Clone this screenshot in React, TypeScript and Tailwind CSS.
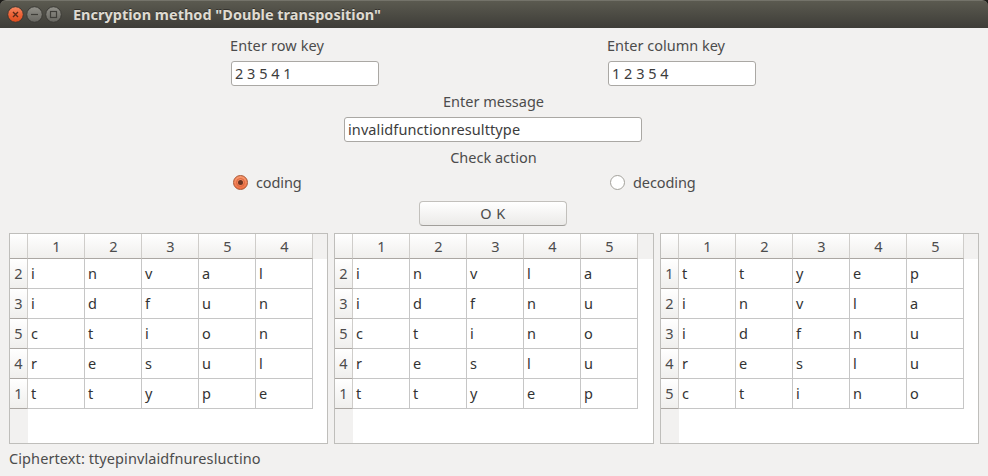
type Grid = { columns: string; rows: [string, string][]; width: string };

const grids: Grid[] = [
  {
    columns: "12354",
    rows: [["2", "inval"], ["3", "idfun"], ["5", "ction"], ["4", "resul"], ["1", "ttype"]],
    width: "w-[319px]",
  },
  {
    columns: "12345",
    rows: [["2", "invla"], ["3", "idfnu"], ["5", "ctino"], ["4", "reslu"], ["1", "ttyep"]],
    width: "w-[320px]",
  },
  {
    columns: "12345",
    rows: [["1", "ttyep"], ["2", "invla"], ["3", "idfnu"], ["4", "reslu"], ["5", "ctino"]],
    width: "w-[319px]",
  },
];

function TitleBar() {
  return (
    <div className="bg-[#1d1c19]">
      <header className="flex h-7 items-center rounded-t-[6px] border-t border-[#74736a] bg-gradient-to-b from-[#5b5a50] to-[#3e3d38] pl-[7px] text-[14.5px] font-bold text-[#dfdbd2]">
        <svg width="56" height="18" viewBox="0 0 56 18" fill="none">
          <defs>
            <linearGradient id="close" x1="0" y1="0" x2="0" y2="1">
              <stop offset="0" stopColor="#f68a64" />
              <stop offset="0.5" stopColor="#ee6337" />
              <stop offset="1" stopColor="#dc4c1d" />
            </linearGradient>
            <linearGradient id="control" x1="0" y1="0" x2="0" y2="1">
              <stop offset="0" stopColor="#92918a" />
              <stop offset="1" stopColor="#676660" />
            </linearGradient>
          </defs>
          <circle cx="8.5" cy="8.5" r="7.8" fill="url(#close)" stroke="#3b3832" />
          <circle cx="27.5" cy="8.5" r="7.8" fill="url(#control)" stroke="#3b3a35" />
          <circle cx="46.5" cy="8.5" r="7.8" fill="url(#control)" stroke="#3b3a35" />
          <path d="M6 6l5 5M11 6l-5 5" stroke="#5b2a18" strokeWidth="1.4" />
          <path d="M24 8.5h7" stroke="#3f3e39" strokeWidth="1.2" />
          <rect x="43.5" y="5.5" width="6" height="6" stroke="#3f3e39" strokeWidth="1.2" />
        </svg>
        <h1 className="ml-[10px] pb-[2px] whitespace-pre [text-shadow:0_-1px_0_#33322d]">Encryption method "Double transposition"</h1>
      </header>
    </div>
  );
}

function Field({ value, className }: { value: string; className: string }) {
  return (
    <input
      readOnly
      value={value}
      className={`block h-[25px] rounded-[3px] border border-[#aaa8a4] bg-white pb-[2px] pl-[3px] text-[#3c3c3c] outline-none ${className}`}
    />
  );
}

function Radio({ checked, label, className }: { checked?: boolean; label: string; className: string }) {
  return (
    <label className={`flex w-[377px] items-center ${className}`}>
      <span
        className={
          checked
            ? "flex size-[15px] items-center justify-center rounded-full border border-[#a9532f] bg-gradient-to-b from-[#f9996f] to-[#ee6f43]"
            : "flex size-[15px] rounded-full border border-[#a3a19b] bg-white"
        }
      >
        {checked && <span className="size-[9px] rounded-full border border-[#d9673f] bg-[#6b3523] bg-clip-content p-px" />}
      </span>
      <span className="ml-[8px]">{label}</span>
    </label>
  );
}

function TransposeTable({ columns, rows, width }: Grid) {
  return (
    <div className={`flex h-[211px] flex-col border border-[#bfbebb] bg-white ${width}`}>
      <div className="flex h-[25px] shrink-0 bg-[#f2f1f0]">
        <div className="w-[18px] border-r border-b border-r-[#cfcdca] border-b-[#aba7a3] bg-gradient-to-b from-white to-[#f0efed]" />
        {columns.split("").map((c) => (
          <div
            key={c}
            className="flex w-[57px] items-center justify-center border-r border-b border-r-[#cfcdca] border-b-[#aba7a3] bg-gradient-to-b from-white to-[#f0efed] pb-px pl-px"
          >
            {c}
          </div>
        ))}
      </div>
      {rows.map(([key, letters]) => (
        <div key={key} className="flex h-[30px] shrink-0">
          <div className="flex w-[18px] items-center justify-center border-r border-b border-r-[#cfcdca] border-b-[#aba7a3] bg-gradient-to-b from-white to-[#f0efed] pb-[2px]">
            {key}
          </div>
          {letters.split("").map((letter, i) => (
            <div key={i} className="flex w-[57px] items-center border-r border-b border-[#c6c6c6] pb-[2px] pl-[3px] text-[#333]">
              {letter}
            </div>
          ))}
        </div>
      ))}
      <div className="w-[18px] grow bg-[#f2f1f0]" />
    </div>
  );
}

export default function App() {
  return (
    <div className="h-[476px] w-[988px] overflow-hidden bg-[#f2f1f0] font-['Noto_Sans','Liberation_Sans',sans-serif] text-[14.5px] leading-[18px] text-[#4c4c4c]">
      <TitleBar />
      <div className="flex h-[33px] items-center pt-px pl-[230px]">
        <span className="w-[377px] tracking-[0.12px]">Enter row key</span>
        <span>Enter column key</span>
      </div>
      <div className="flex gap-[229px] pl-[231px]">
        <Field value="2 3 5 4 1" className="w-[148px]" />
        <Field value="1 2 3 5 4" className="w-[148px]" />
      </div>
      <div className="flex h-[31px] items-center justify-center pr-px pb-[2px]">Enter message</div>
      <Field value="invalidfunctionresulttype" className="ml-[344px] w-[298px] tracking-[0.1px]" />
      <div className="flex h-[31px] items-center justify-center pr-px pb-[2px]">Check action</div>
      <div className="flex h-[20px] items-center pb-[2px] pl-[233px]">
        <Radio checked label="coding" className="tracking-[-0.1px]" />
        <Radio label="decoding" className="tracking-[-0.1px]" />
      </div>
      <button className="mt-[8px] ml-[419px] flex h-[25px] w-[148px] items-center justify-center rounded-[4px] border border-[#c2c0bc] border-b-[#a19f9b] bg-gradient-to-b from-white to-[#ebeae8] pb-[2px] tracking-[0.4px]">
        O K
      </button>
      <main className="mt-[7px] flex justify-between pr-[9px] pl-[9px]">
        {grids.map((grid, i) => (
          <TransposeTable key={i} {...grid} />
        ))}
      </main>
      <p className="pt-[5px] pl-[9px] tracking-[0.09px]">Ciphertext: ttyepinvlaidfnuresluctino</p>
    </div>
  );
}
